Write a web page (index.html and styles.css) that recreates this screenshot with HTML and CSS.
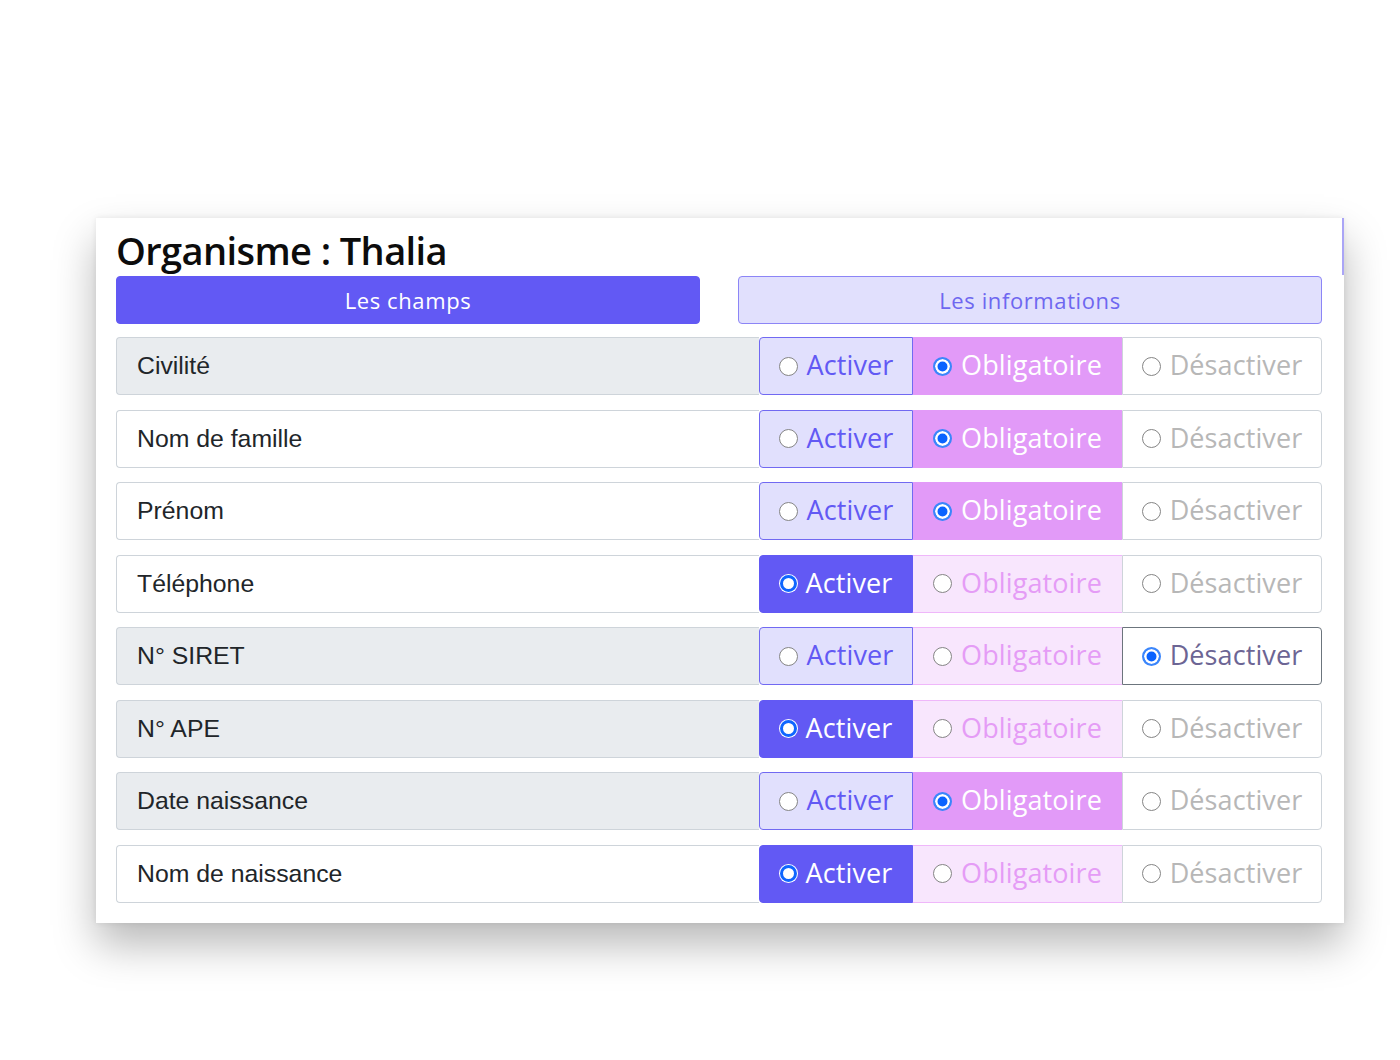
FILE: index.html
```html
<!DOCTYPE html>
<html lang="fr">
<head>
<meta charset="utf-8">
<title>Organisme : Thalia</title>
<link rel="stylesheet" href="styles.css">
</head>
<body>
<div class="page">
  <div class="card">
    <h1 class="title">Organisme : Thalia</h1>
    <div class="tabs">
      <button class="tab tab-active">Les champs</button>
      <button class="tab tab-idle">Les informations</button>
    </div>
    <div class="rows">
      <div class="row">
        <div class="label label-gray">Civilité</div>
        <div class="opt act"><span class="radio"></span>Activer</div>
        <div class="opt obl on"><span class="radio checked"></span>Obligatoire</div>
        <div class="opt des"><span class="radio"></span>Désactiver</div>
      </div>
      <div class="row">
        <div class="label">Nom de famille</div>
        <div class="opt act"><span class="radio"></span>Activer</div>
        <div class="opt obl on"><span class="radio checked"></span>Obligatoire</div>
        <div class="opt des"><span class="radio"></span>Désactiver</div>
      </div>
      <div class="row">
        <div class="label">Prénom</div>
        <div class="opt act"><span class="radio"></span>Activer</div>
        <div class="opt obl on"><span class="radio checked"></span>Obligatoire</div>
        <div class="opt des"><span class="radio"></span>Désactiver</div>
      </div>
      <div class="row">
        <div class="label">Téléphone</div>
        <div class="opt act on"><span class="radio ring"></span>Activer</div>
        <div class="opt obl"><span class="radio"></span>Obligatoire</div>
        <div class="opt des"><span class="radio"></span>Désactiver</div>
      </div>
      <div class="row">
        <div class="label label-gray">N° SIRET</div>
        <div class="opt act"><span class="radio"></span>Activer</div>
        <div class="opt obl"><span class="radio"></span>Obligatoire</div>
        <div class="opt des on"><span class="radio checked"></span>Désactiver</div>
      </div>
      <div class="row">
        <div class="label label-gray">N° APE</div>
        <div class="opt act on"><span class="radio ring"></span>Activer</div>
        <div class="opt obl"><span class="radio"></span>Obligatoire</div>
        <div class="opt des"><span class="radio"></span>Désactiver</div>
      </div>
      <div class="row">
        <div class="label label-gray">Date naissance</div>
        <div class="opt act"><span class="radio"></span>Activer</div>
        <div class="opt obl on"><span class="radio checked"></span>Obligatoire</div>
        <div class="opt des"><span class="radio"></span>Désactiver</div>
      </div>
      <div class="row">
        <div class="label">Nom de naissance</div>
        <div class="opt act on"><span class="radio ring"></span>Activer</div>
        <div class="opt obl"><span class="radio"></span>Obligatoire</div>
        <div class="opt des"><span class="radio"></span>Désactiver</div>
      </div>
    </div>
  </div>
</div>
</body>
</html>
```

FILE: styles.css
```css
* { box-sizing: border-box; }

html, body {
  margin: 0;
  padding: 0;
  background: #ffffff;
}

.page {
  padding: 218px 0 130px 96px;
}

.card {
  position: relative;
  width: 1248px;
  background: #ffffff;
  padding: 10px 22px 20px 20px;
  box-shadow: 0 22px 40px rgba(0, 0, 0, 0.28), 0 0 6px rgba(0, 0, 0, 0.08);
}

.card::after {
  content: "";
  position: absolute;
  right: 0;
  top: 0;
  width: 2px;
  height: 57px;
  background: #aaa5f6;
}

.title {
  margin: 0 0 4px 0;
  font-family: "Open Sans", "DejaVu Sans", sans-serif;
  font-weight: 600;
  font-size: 38px;
  line-height: 44px;
  color: #0c0c0c;
  letter-spacing: -0.6px;
}

.tabs {
  display: flex;
  gap: 38px;
}

.tab {
  flex: 1;
  height: 48px;
  border-radius: 4px;
  font-family: "Open Sans", "DejaVu Sans", sans-serif;
  font-size: 22px;
  letter-spacing: 0.6px;
  cursor: pointer;
}

.tab-active {
  background: #6259f4;
  border: 1px solid #6259f4;
  color: #ffffff;
}

.tab-idle {
  background: #e1e0fd;
  border: 1px solid #8c85f6;
  color: #6e67f0;
}

.rows {
  margin-top: 13px;
  display: flex;
  flex-direction: column;
  gap: 14.5px;
}

.row {
  display: flex;
  height: 58px;
}

.label {
  width: 643px;
  display: flex;
  align-items: center;
  padding-left: 20px;
  border: 1px solid #ced4da;
  border-right: none;
  border-radius: 4px 0 0 4px;
  background: #ffffff;
  font-family: "Liberation Sans", Arial, sans-serif;
  font-size: 24.8px;
  color: #212529;
}

.label-gray {
  background: #e9ecef;
}

.opt {
  display: flex;
  align-items: center;
  justify-content: center;
  gap: 9px;
  padding-bottom: 3px;
  border: 1px solid;
  font-family: "Open Sans", "DejaVu Sans", sans-serif;
  font-size: 27px;
  letter-spacing: 0.1px;
  white-space: nowrap;
}

.opt .radio {
  margin-top: 3px;
}

.act {
  width: 154px;
  border-radius: 4px 0 0 4px;
  background: #e1e0fd;
  border-color: #7169f2;
  color: #6259f4;
}

.act.on {
  background: #6259f4;
  border-color: #6259f4;
  color: #ffffff;
}

.obl {
  width: 209px;
  background: #f8e6fd;
  border-color: #efb7fa;
  border-left: none;
  border-right: none;
  color: #e59cf6;
}

.obl.on {
  background: #e29af8;
  border-color: #e29af8;
  color: #ffffff;
}

.des {
  width: 200px;
  border-radius: 0 4px 4px 0;
  background: #ffffff;
  border-color: #ced4da;
  color: #b7b7b7;
}

.des.on {
  border-color: #6c757d;
  color: #6c6594;
}

.radio {
  flex: none;
  width: 19px;
  height: 19px;
  border-radius: 50%;
  background: #ffffff;
  border: 1px solid #858585;
}

.radio.checked {
  border: 2px solid #3b86fb;
  background: #0a63ff;
  box-shadow: inset 0 0 0 2.5px #ffffff;
}

.radio.ring {
  width: 17px;
  height: 17px;
  border: 3px solid #0f66ff;
  background: #ffffff;
  box-shadow: 0 0 0 1px #ffffff;
}
```
